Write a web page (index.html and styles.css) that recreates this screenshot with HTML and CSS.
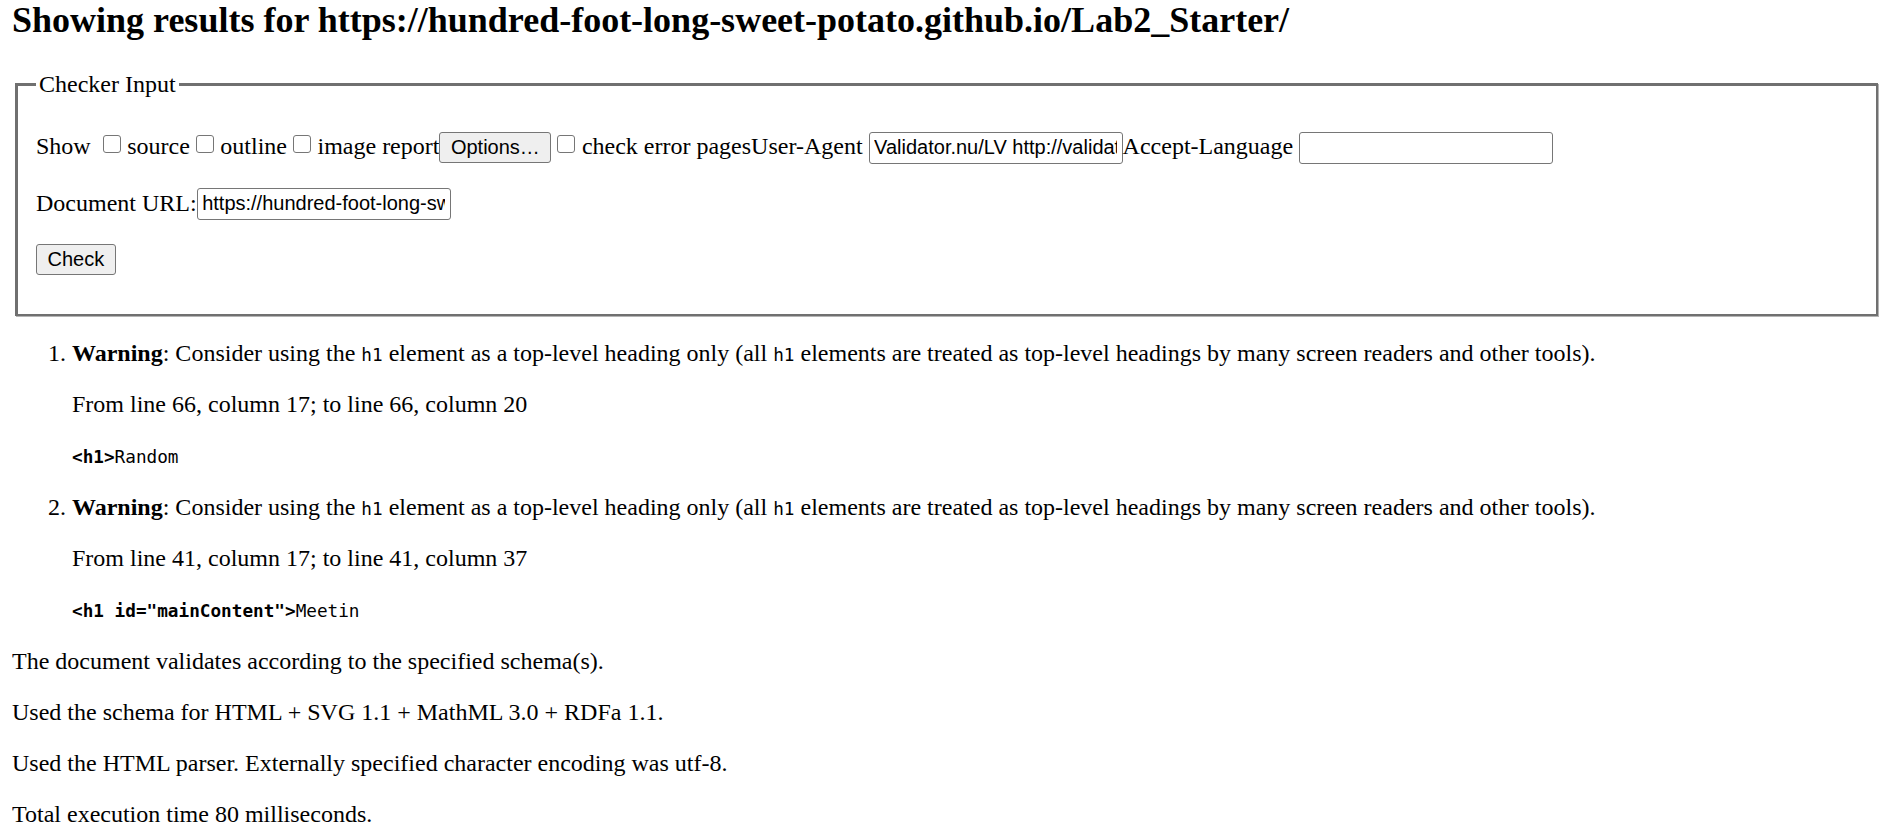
FILE: index.html
```html
<!DOCTYPE html>
<html lang="en">
<head>
<meta charset="utf-8">
<title>Showing results for https://hundred-foot-long-sweet-potato.github.io/Lab2_Starter/ - Nu Html Checker</title>
<link rel="stylesheet" href="styles.css">
</head>
<body class="page">
<h1 class="title">Showing results for https://hundred-foot-long-sweet-potato.github.io/Lab2_Starter/</h1>
<form class="checker">
<fieldset class="input-box">
<legend class="input-legend">Checker Input</legend>
<p class="row">Show <label class="opt"><input type="checkbox" class="cb"> source</label><label class="opt"><input type="checkbox" class="cb"> outline</label><label class="opt"><input type="checkbox" class="cb"> image report</label><button type="button" class="btn">Options…</button><label class="opt"><input type="checkbox" class="cb"> check error pages</label><label class="opt">User-Agent <input type="text" class="field" value="Validator.nu/LV http://validator.w3.org/services"></label><label class="opt">Accept-Language <input type="text" class="field" value=""></label></p>
<p class="row"><label class="opt">Document URL:</label><input type="url" class="field" value="https://hundred-foot-long-sweet-potato.github.io/Lab2_Starter/"></p>
<p class="row"><input type="submit" class="btn" value="Check"></p>
</fieldset>
</form>
<ol class="results">
<li class="msg"><p class="para"><strong>Warning</strong>: Consider using the <code class="mono">h1</code> element as a top-level heading only (all <code class="mono">h1</code> elements are treated as top-level headings by many screen readers and other tools).</p><p class="para">From line 66, column 17; to line 66, column 20</p><p class="para"><code class="mono"><b>&lt;h1&gt;</b>Random</code></p></li>
<li class="msg"><p class="para"><strong>Warning</strong>: Consider using the <code class="mono">h1</code> element as a top-level heading only (all <code class="mono">h1</code> elements are treated as top-level headings by many screen readers and other tools).</p><p class="para">From line 41, column 17; to line 41, column 37</p><p class="para"><code class="mono"><b>&lt;h1 id="mainContent"&gt;</b>Meetin</code></p></li>
</ol>
<p class="para">The document validates according to the specified schema(s).</p>
<p class="para">Used the schema for HTML + SVG 1.1 + MathML 3.0 + RDFa 1.1.</p>
<p class="para">Used the HTML parser. Externally specified character encoding was utf-8.</p>
<p class="para">Total execution time 80 milliseconds.</p>
</body>
</html>
```
FILE: styles.css
```css
html { background: #fff; }
.page {
  margin: 0 0 0 12px;
  font-family: "Liberation Serif", "Times New Roman", serif;
  font-size: 24px;
  color: #000;
  overflow: hidden;
}
.title {
  font-size: 36px;
  font-weight: bold;
  margin: -1px 0 29.9px;
  white-space: nowrap;
}
.checker { margin: 0; }
.input-box {
  margin: 0 2px 0 3px;
  border-style: solid;
  border-color: #707070;
  border-width: 3px 2px 2px 3px;
  box-shadow: 1px 1px 0 #b4b4b4;
  padding: 8.4px 18px 15px;
}
.input-legend { padding: 0 3px; }
.row { margin: 24px 0; }
.cb {
  -webkit-appearance: none;
  appearance: none;
  width: 18px;
  height: 18px;
  margin: 4.5px 0.5px 4.5px 6px;
  border: 1.5px solid #767676;
  border-radius: 3px;
  background: #fff;
  vertical-align: -3px;
  box-sizing: border-box;
}
.btn {
  font-family: "Liberation Sans", Arial, sans-serif;
  font-size: 20px;
  color: #000;
  background: #efefef;
  border: 1.5px solid #767676;
  border-radius: 3px;
  padding: 3px 10.5px;
  margin: 0;
}
.field {
  font-family: "Liberation Sans", Arial, sans-serif;
  font-size: 20px;
  color: #000;
  background: #fff;
  border: 1.5px solid #767676;
  border-radius: 3px;
  padding: 3.5px 4.5px;
  margin: 0;
  width: 254px;
  box-sizing: border-box;
}
.results {
  margin: 24px 0;
  padding-left: 60px;
}
.para {
  margin: 24px 0;
  line-height: 27.3px;
}
.mono {
  font-family: "DejaVu Sans Mono", monospace;
  font-size: 17.7px;
  line-height: 1;
}
```
